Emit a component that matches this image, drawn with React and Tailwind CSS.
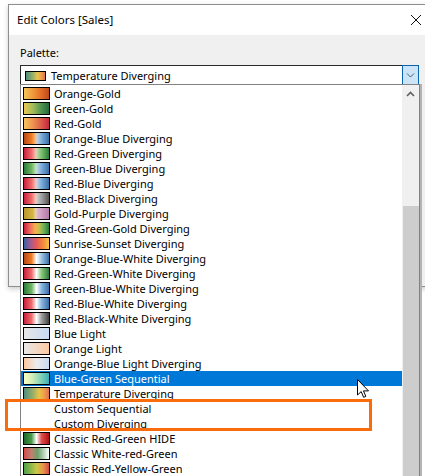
import React from 'react';

// swatch gradients for each palette in the list
const palettes = [
  { name: 'Orange-Gold', sw: 'bg-[linear-gradient(to_right,#f6c45c,#f09a3a_35%,#e6722a_65%,#c04a1c)]' },
  { name: 'Green-Gold', sw: 'bg-[linear-gradient(to_right,#e8ca55,#a4bc5a_35%,#4e9250_70%,#25693a)]' },
  { name: 'Red-Gold', sw: 'bg-[linear-gradient(to_right,#f7c45e,#ef9450_35%,#dc5a4a_70%,#c4273e)]' },
  { name: 'Orange-Blue Diverging', sw: 'bg-[linear-gradient(to_right,#b5471a,#f07c22_30%,#fbc08a_48%,#b8d4ec_52%,#6fa2d0_75%,#3a6ea8)]' },
  { name: 'Red-Green Diverging', sw: 'bg-[linear-gradient(to_right,#c5203c,#f06b6b_30%,#fbc4b8_48%,#b8dba8_52%,#6db562_75%,#2b7a3a)]' },
  { name: 'Green-Blue Diverging', sw: 'bg-[linear-gradient(to_right,#2b7a3a,#6db562_30%,#c4e4b4_48%,#b8d4ec_52%,#6fa2d0_75%,#3a6ea8)]' },
  { name: 'Red-Blue Diverging', sw: 'bg-[linear-gradient(to_right,#c5203c,#f06b6b_30%,#fbc4b8_48%,#b8d4ec_52%,#6fa2d0_75%,#3a6ea8)]' },
  { name: 'Red-Black Diverging', sw: 'bg-[linear-gradient(to_right,#c5203c,#f06b6b_30%,#fbc4b8_48%,#cacaca_52%,#959595_75%,#555555)]' },
  { name: 'Gold-Purple Diverging', sw: 'bg-[linear-gradient(to_right,#b8962a,#d6b445_35%,#e8d8a8_48%,#e0b8d0_52%,#cc98be_75%,#b07aa6)]' },
  { name: 'Red-Green-Gold Diverging', sw: 'bg-[linear-gradient(to_right,#c5203c,#f07060_25%,#f5b04a_45%,#c8c050_60%,#6ab05a_80%,#2b7a3a)]' },
  { name: 'Sunrise-Sunset Diverging', sw: 'bg-[linear-gradient(to_right,#3a5fa0,#a05a90_25%,#e85a5a_50%,#f08a3a_75%,#f5c04a)]' },
  { name: 'Orange-Blue-White Diverging', sw: 'bg-[linear-gradient(to_right,#b5471a,#f07c22_30%,#ffffff_50%,#9ec4e4_70%,#3a6ea8)]' },
  { name: 'Red-Green-White Diverging', sw: 'bg-[linear-gradient(to_right,#c5203c,#f06b6b_30%,#ffffff_50%,#8cc87a_70%,#2b7a3a)]' },
  { name: 'Green-Blue-White Diverging', sw: 'bg-[linear-gradient(to_right,#2b7a3a,#6db562_30%,#ffffff_50%,#8ab8e0_70%,#3a6ea8)]' },
  { name: 'Red-Blue-White Diverging', sw: 'bg-[linear-gradient(to_right,#c5203c,#f06b6b_30%,#ffffff_50%,#8ab8e0_70%,#3a6ea8)]' },
  { name: 'Red-Black-White Diverging', sw: 'bg-[linear-gradient(to_right,#c5203c,#f06b6b_30%,#ffffff_50%,#a0a0a0_70%,#404040)]' },
  { name: 'Blue Light', sw: 'bg-[linear-gradient(to_right,#e8e8e8,#c8daf2)]' },
  { name: 'Orange Light', sw: 'bg-[linear-gradient(to_right,#e8e8e8,#fdc9a0)]' },
  { name: 'Orange-Blue Light Diverging', sw: 'bg-[linear-gradient(to_right,#fdc7a0,#ececec_50%,#c8daf2)]' },
  { name: 'Blue-Green Sequential', sw: 'bg-[linear-gradient(to_right,#fbfdc0,#d8f0b8_30%,#88d4b8_65%,#3ab0b4)]', selected: true },
  { name: 'Temperature Diverging', sw: 'bg-[linear-gradient(to_right,#4e8c7c,#96ae6a_35%,#e8c44a_60%,#eea048_80%,#e07058)]' },
  { name: 'Custom Sequential' },
  { name: 'Custom Diverging' },
  { name: 'Classic Red-Green HIDE', sw: 'bg-[linear-gradient(to_right,#1a6a2a,#4a9a4a_30%,#ffffff_50%,#e05050_70%,#b01010)]' },
  { name: 'Classic White-red-Green', sw: 'bg-[linear-gradient(to_right,#d24a4a,#c08070_30%,#6aa06a_55%,#ffffff)]' },
  { name: 'Classic Red-Yellow-Green', sw: 'bg-[linear-gradient(to_right,#4aa04a,#c8c848_50%,#e89a48_75%,#d84a4a)]' },
];

function Chevron({ up }) {
  return (
    <svg width="9" height="6" viewBox="0 0 9 6">
      {up ? (
        <path d="M1 5 L4.5 1.5 L8 5" fill="none" stroke="#606060" strokeWidth="1.6" />
      ) : (
        <path d="M1 1.5 L4.5 5 L8 1.5" fill="none" stroke="#505a64" strokeWidth="1" />
      )}
    </svg>
  );
}

export default function App() {
  return (
    <div className="relative h-[476px] w-[425px] overflow-hidden bg-white font-['Segoe_UI','Noto_Sans',sans-serif] text-[11px] text-black">
      {/* dialog behind the open dropdown */}
      <div className="ml-[8px] mt-[4px] w-[420px] border border-[#8e8e8e] shadow-[0_2px_5px_rgba(0,0,0,0.2)]">
        <div className="flex h-[30px] items-center justify-between bg-white pl-[8px] pr-[6px]">
          <span className="text-[11.5px]">Edit Colors [Sales]</span>
          <svg width="10" height="10" viewBox="0 0 10 10">
            <path d="M0 0 L10 10 M10 0 L0 10" stroke="#111" strokeWidth="1" />
          </svg>
        </div>
        <div className="h-[251px] bg-[#f0f0f0] pl-[11px] pt-[10px]">
          <div className="h-[15px] leading-[15px]">Palette:</div>
          <div className="mt-[5px] flex h-[20px] w-[399px]">
            <div className="flex flex-1 items-center border-l border-t border-[#2a2a2a] bg-white pl-[4px]">
              <div className="h-[10px] w-[21px] border border-black bg-[linear-gradient(to_right,#4e8c7c,#96ae6a_35%,#e8c44a_60%,#eea048_80%,#e07058)]" />
              <span className="ml-[5px] leading-[15px]">Temperature Diverging</span>
            </div>
            <div className="flex w-[17px] items-center justify-center border border-[#0a64ad] bg-[#cce4f7]">
              <Chevron />
            </div>
          </div>
        </div>
      </div>

      {/* dropdown list */}
      <div className="absolute left-[20px] top-[84px] flex h-[400px] w-[400px] border-l border-r border-t border-[#828282] bg-white shadow-[2px_0_0_#b4b4b4]">
        <div className="w-[381px] pt-[1px]">
          {palettes.map((p) => (
            <div
              key={p.name}
              className={
                p.selected
                  ? 'flex h-[15px] items-center bg-[#0078d7] pl-[2px] text-white'
                  : 'flex h-[15px] items-center pl-[2px]'
              }
            >
              {p.sw ? (
                <div className={'h-[13px] w-[27px] shrink-0 border border-black ' + p.sw} />
              ) : (
                <div className="h-[13px] w-[27px] shrink-0" />
              )}
              <span className="ml-[4px] whitespace-nowrap leading-[15px]">{p.name}</span>
            </div>
          ))}
        </div>
        <div className="flex w-[17px] flex-col bg-[#f0f0f0]">
          <div className="flex h-[17px] items-center justify-center">
            <Chevron up />
          </div>
          <div className="h-[104px]" />
          <div className="ml-[1px] flex-1 bg-[#cdcdcd]" />
        </div>
      </div>

      {/* orange callout around the custom palettes */}
      <div className="absolute left-[5px] top-[399px] h-[32px] w-[367px] border-[3px] border-[#f96b0b]" />

      {/* mouse pointer */}
      <svg className="absolute left-[357px] top-[379px]" width="13" height="20" viewBox="0 0 13 20">
        <path d="M0.5 0.5 L0.5 16 L4.2 12.6 L6.6 18.3 L8.8 17.4 L6.5 11.9 L11.5 11.9 Z" fill="#fff" stroke="#000" strokeWidth="1" strokeLinejoin="round" />
      </svg>
    </div>
  );
}
